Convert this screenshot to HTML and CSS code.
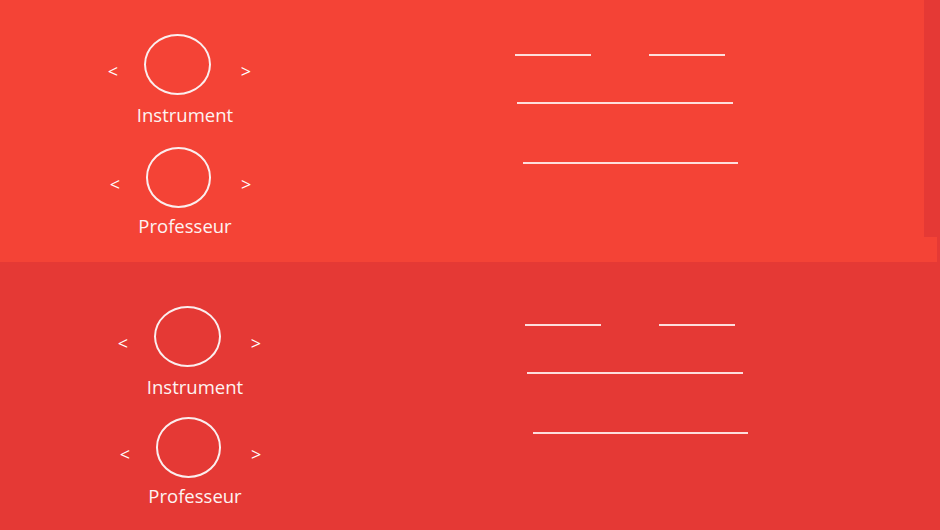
FILE: index.html
```html
<!DOCTYPE html>
<html lang="fr">
<head>
<meta charset="utf-8">
<title>Sélection</title>
<link rel="stylesheet" href="styles.css">
</head>
<body>
<div class="page">
  <section class="panel panel-top">
    <div class="selectors">
      <div class="selector">
        <div class="picker">
          <span class="arrow arrow-prev">&lt;</span>
          <span class="circle"></span>
          <span class="arrow arrow-next">&gt;</span>
        </div>
        <div class="label">Instrument</div>
      </div>
      <div class="selector selector-second">
        <div class="picker">
          <span class="arrow arrow-prev">&lt;</span>
          <span class="circle"></span>
          <span class="arrow arrow-next">&gt;</span>
        </div>
        <div class="label">Professeur</div>
      </div>
    </div>
    <div class="fields">
      <div class="field-row">
        <span class="field field-short"></span>
        <span class="field field-short"></span>
      </div>
      <div class="field field-long field-mid"></div>
      <div class="field field-long field-last"></div>
    </div>
    <div class="scroll-strip"></div>
  </section>
  <section class="panel panel-bottom">
    <div class="selectors">
      <div class="selector">
        <div class="picker">
          <span class="arrow arrow-prev">&lt;</span>
          <span class="circle"></span>
          <span class="arrow arrow-next">&gt;</span>
        </div>
        <div class="label">Instrument</div>
      </div>
      <div class="selector selector-second">
        <div class="picker">
          <span class="arrow arrow-prev">&lt;</span>
          <span class="circle"></span>
          <span class="arrow arrow-next">&gt;</span>
        </div>
        <div class="label">Professeur</div>
      </div>
    </div>
    <div class="fields">
      <div class="field-row">
        <span class="field field-short"></span>
        <span class="field field-short"></span>
      </div>
      <div class="field field-long field-mid"></div>
      <div class="field field-long field-last"></div>
    </div>
  </section>
</div>
</body>
</html>
```
FILE: styles.css
```css
* { box-sizing: border-box; }

html, body {
  margin: 0;
  padding: 0;
  width: 940px;
  height: 530px;
  overflow: hidden;
  background: #e53935;
  font-family: "Open Sans", "Noto Sans", sans-serif;
  color: #ffffff;
}

.page {
  position: relative;
  width: 940px;
  height: 530px;
}

.panel {
  display: flex;
  align-items: flex-start;
}

.panel-top {
  width: 937px;
  height: 262px;
  background: #f44336;
  padding: 34px 0 0 103px;
}

.panel-bottom {
  width: 940px;
  height: 268px;
  background: #e53935;
  padding: 44px 0 0 113px;
}

.scroll-strip {
  position: absolute;
  top: 0;
  right: 0;
  width: 16px;
  height: 237px;
  background: #e53935;
}

.selectors {
  width: 412px;
  flex: none;
}

.selector {
  width: 153px;
}

.selector-second {
  margin-top: 21px;
}

.panel-bottom .selector-second {
  margin-top: 19px;
}

.picker {
  display: flex;
  align-items: center;
}

.selector-second .picker {
  margin-left: 2px;
}

.arrow {
  width: 20px;
  text-align: center;
  font-size: 18px;
  line-height: 20px;
  margin-top: 13px;
}

.arrow-next {
  margin-left: 25px;
}

.circle {
  width: 67px;
  height: 61px;
  margin-left: 21px;
  border: 2px solid #fbeeee;
  border-radius: 50%;
}

.label {
  margin-top: 9px;
  padding-left: 11px;
  text-align: center;
  font-size: 18.5px;
  line-height: 22px;
  color: #fdf3f2;
}

.selector-second .label {
  margin-top: 7px;
}

.fields {
  padding-top: 20px;
}

.panel-bottom .fields {
  padding-top: 18px;
}

.field-row {
  display: flex;
  gap: 58px;
}

.field {
  display: block;
  height: 2px;
  background: rgba(255, 240, 238, 0.9);
}

.field-short {
  width: 76px;
}

.field-long {
  width: 216px;
}

.field-mid {
  margin: 46px 0 0 2px;
}

.field-last {
  width: 215px;
  margin: 58px 0 0 8px;
}
```
